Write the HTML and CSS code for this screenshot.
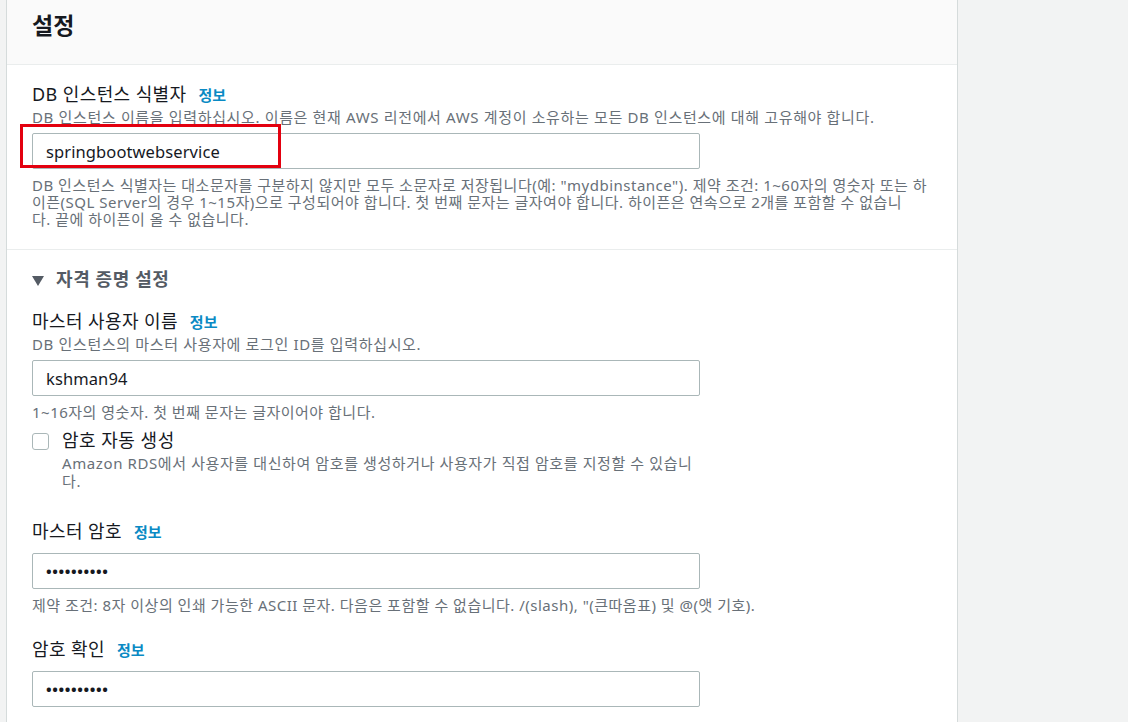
FILE: index.html
```html
<!DOCTYPE html>
<html lang="ko">
<head>
<meta charset="utf-8">
<title>설정</title>
<link rel="stylesheet" href="styles.css">
</head>
<body>
<div class="page">
  <section class="panel">
    <header class="panel-header">
      <h2 class="title">설정</h2>
    </header>

    <div class="section">
      <div class="field">
        <div class="label-row"><span class="label">DB 인스턴스 식별자</span><a class="info">정보</a></div>
        <div class="desc">DB 인스턴스 이름을 입력하십시오. 이름은 현재 AWS 리전에서 AWS 계정이 소유하는 모든 DB 인스턴스에 대해 고유해야 합니다.</div>
        <div class="control">
          <input class="input" type="text" value="springbootwebservice" readonly>
          <div class="highlight"></div>
        </div>
        <div class="help">DB 인스턴스 식별자는 대소문자를 구분하지 않지만 모두 소문자로 저장됩니다(예: "mydbinstance"). 제약 조건: 1~60자의 영숫자 또는 하<br>이픈(SQL Server의 경우 1~15자)으로 구성되어야 합니다. 첫 번째 문자는 글자여야 합니다. 하이픈은 연속으로 2개를 포함할 수 없습니<br>다. 끝에 하이픈이 올 수 없습니다.</div>
      </div>
    </div>

    <div class="section">
      <div class="expander">
        <svg class="caret" width="12" height="10" viewBox="0 0 12 10"><path d="M0 0H12L6 10Z" fill="#545b64"/></svg>
        <span>자격 증명 설정</span>
      </div>

      <div class="field field-user">
        <div class="label-row"><span class="label">마스터 사용자 이름</span><a class="info">정보</a></div>
        <div class="desc">DB 인스턴스의 마스터 사용자에 로그인 ID를 입력하십시오.</div>
        <div class="control">
          <input class="input" type="text" value="kshman94" readonly>
        </div>
        <div class="help">1~16자의 영숫자. 첫 번째 문자는 글자이어야 합니다.</div>
        <div class="check-row">
          <span class="checkbox"></span>
          <span class="check-label">암호 자동 생성</span>
        </div>
        <div class="check-desc">Amazon RDS에서 사용자를 대신하여 암호를 생성하거나 사용자가 직접 암호를 지정할 수 있습니<br>다.</div>
      </div>

      <div class="field field-pass">
        <div class="label-row"><span class="label">마스터 암호</span><a class="info">정보</a></div>
        <div class="control control-tight">
          <div class="input dots">••••••••••</div>
        </div>
        <div class="help">제약 조건: 8자 이상의 인쇄 가능한 ASCII 문자. 다음은 포함할 수 없습니다. /(slash), "(큰따옴표) 및 @(앳 기호).</div>
      </div>

      <div class="field field-confirm">
        <div class="label-row"><span class="label">암호 확인</span><a class="info">정보</a></div>
        <div class="control control-tight">
          <div class="input dots">••••••••••</div>
        </div>
      </div>
    </div>
  </section>
</div>
</body>
</html>
```

FILE: styles.css
```css
* {
  box-sizing: border-box;
}

body {
  margin: 0;
  background: #f2f3f3;
  font-family: "Noto Sans", "Noto Sans CJK KR", sans-serif;
  color: #16191f;
}

.page {
  padding-left: 6px;
  height: 722px;
  overflow: hidden;
}

.panel {
  width: 952px;
  min-height: 722px;
  background: #ffffff;
  border-left: 1px solid #d5dbdb;
  border-right: 1px solid #d5dbdb;
}

.panel-header {
  height: 65px;
  padding: 10px 25px 24px;
  background: #fafafa;
  border-bottom: 1px solid #eaeded;
}

.title {
  margin: 0;
  font-size: 23px;
  font-weight: 700;
  line-height: 30px;
}

.section {
  padding: 17px 25px 21px;
  border-bottom: 1px solid #eaeded;
}

.label-row {
  display: flex;
  align-items: baseline;
  height: 24px;
  line-height: 24px;
}

.label {
  font-size: 18px;
  letter-spacing: 0.4px;
}

.info {
  margin-left: 12px;
  font-size: 15px;
  font-weight: 700;
  color: #0a8ac4;
  cursor: pointer;
}

.desc {
  margin-top: 1px;
  height: 20px;
  font-size: 15px;
  line-height: 20px;
  letter-spacing: 0.65px;
  color: #687078;
  white-space: nowrap;
}

.control {
  position: relative;
  margin-top: 6px;
  width: 668px;
}

.control-tight {
  margin-top: 10px;
}

.input {
  display: flex;
  align-items: center;
  width: 668px;
  height: 36px;
  padding: 0 13px;
  border: 1px solid #aab7b8;
  border-radius: 2px;
  background: #ffffff;
  font-family: inherit;
  font-size: 16.5px;
  letter-spacing: 0.1px;
  color: #16191f;
  outline: none;
}

.dots {
  font-size: 15px;
  letter-spacing: 0.6px;
  font-weight: 700;
}

.highlight {
  position: absolute;
  left: -12px;
  top: -9px;
  width: 261px;
  height: 44px;
  border: 3px solid #e3000f;
  pointer-events: none;
}

.help {
  margin-top: 8px;
  font-size: 15px;
  line-height: 17px;
  letter-spacing: 0.5px;
  color: #687078;
  white-space: nowrap;
}

.expander {
  display: flex;
  align-items: flex-start;
  height: 24px;
  line-height: 24px;
  font-size: 18px;
  letter-spacing: 0.6px;
  font-weight: 700;
  color: #545b64;
}

.caret {
  margin-top: 9px;
  margin-right: 12px;
  flex: none;
}

.field-user {
  margin-top: 18px;
}

.check-row {
  display: flex;
  align-items: flex-start;
  height: 24px;
  margin-top: 7px;
  line-height: 24px;
}

.checkbox {
  flex: none;
  width: 17px;
  height: 17px;
  margin-top: 5px;
  margin-right: 13px;
  border: 1px solid #aab7b8;
  border-radius: 3px;
  background: #ffffff;
}

.check-label {
  font-size: 18px;
  letter-spacing: 0.5px;
}

.check-desc {
  margin-top: 3px;
  padding-left: 30px;
  font-size: 15px;
  line-height: 17.5px;
  letter-spacing: 0.6px;
  color: #687078;
  white-space: nowrap;
}

.field-pass {
  margin-top: 29px;
}

.field-confirm {
  margin-top: 23px;
}
```
